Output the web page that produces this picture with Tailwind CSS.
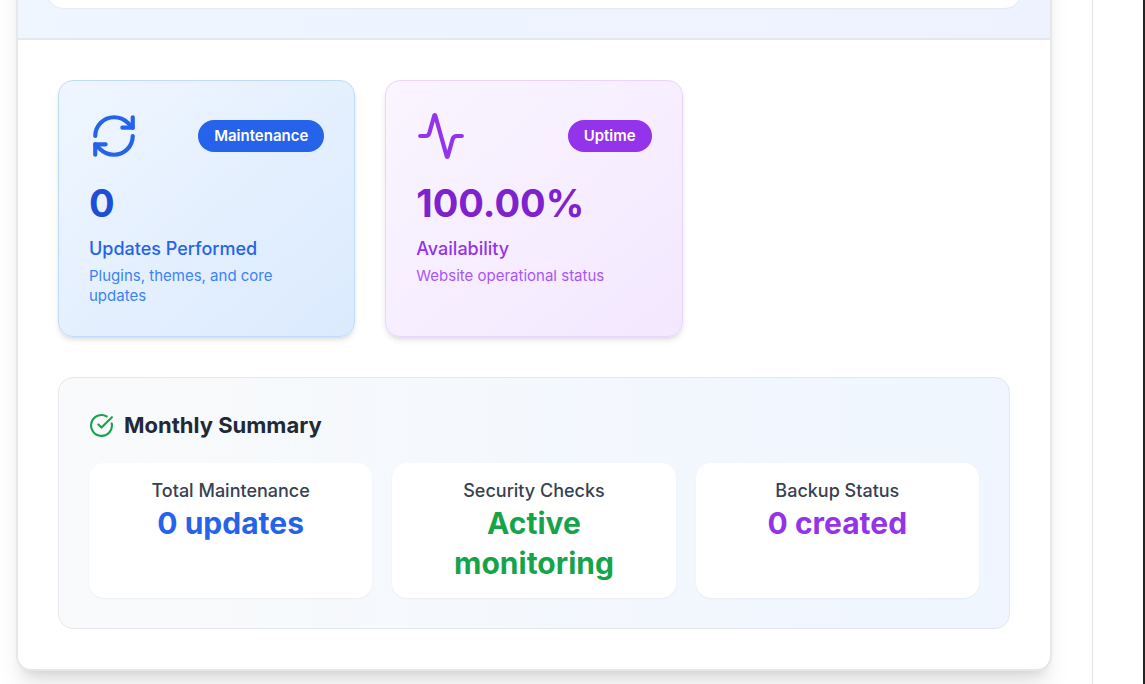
<!DOCTYPE html>
<html lang="en">
<head>
<meta charset="utf-8">
<meta name="viewport" content="width=device-width, initial-scale=1">
<title>Monthly Report</title>
<script src="https://cdn.jsdelivr.net/npm/@tailwindcss/browser@4"></script>
</head>
<body class="bg-[#242424] font-['Inter',sans-serif] antialiased">
<div class="mr-0.5 flex h-screen overflow-hidden bg-white">
  <main class="min-w-0 flex-1 border-r border-[#e5e5e5] pr-10 pl-4">
    <article class="-mt-20 overflow-hidden rounded-[15px] border-2 border-[#e5e7eb] bg-white shadow-[0_20px_25px_-5px_rgb(0_0_0/0.1),0_8px_10px_-6px_rgb(0_0_0/0.1)]">
      <header class="border-b-2 border-[#e5e7eb] bg-linear-to-r from-[#eff6ff] to-[#eef2ff] p-[30px]">
        <div class="h-14 rounded-[15px] bg-white shadow-[0_1px_2px_rgb(0_0_0/0.05)]"></div>
      </header>
      <div class="flex flex-col gap-10 p-10">
        <section class="grid grid-cols-3 gap-[30px]" aria-label="Statistics">
          <div class="rounded-[15px] border border-[#bfdbfe] bg-linear-to-br from-[#eff6ff] to-[#dbeafe] p-[30px] shadow-[0_4px_6px_-1px_rgb(0_0_0/0.1),0_2px_4px_-2px_rgb(0_0_0/0.1)]">
            <div class="mb-5 flex items-center justify-between">
              <svg class="size-[50px] text-[#2563eb]" viewBox="0 0 24 24" fill="none" stroke="currentColor" stroke-width="2" stroke-linecap="round" stroke-linejoin="round" aria-hidden="true"><path d="M3 12a9 9 0 0 1 9-9 9.75 9.75 0 0 1 6.74 2.74L21 8"/><path d="M21 3v5h-5"/><path d="M21 12a9 9 0 0 1-9 9 9.75 9.75 0 0 1-6.74-2.74L3 16"/><path d="M8 16H3v5"/></svg>
              <span class="rounded-full bg-[#2563eb] px-4 py-1.5 text-[15px] leading-5 font-semibold text-white">Maintenance</span>
            </div>
            <p class="text-[38px] leading-[45px] font-bold text-[#1d4ed8]">0</p>
            <p class="mt-2.5 text-[18px] leading-[25px] font-medium text-[#2563eb]">Updates Performed</p>
            <p class="mt-[5px] text-[15px] leading-5 text-[#3b82f6]">Plugins, themes, and core updates</p>
          </div>
          <div class="rounded-[15px] border border-[#e9d5ff] bg-linear-to-br from-[#faf5ff] to-[#f3e8ff] p-[30px] shadow-[0_4px_6px_-1px_rgb(0_0_0/0.1),0_2px_4px_-2px_rgb(0_0_0/0.1)]">
            <div class="mb-5 flex items-center justify-between">
              <svg class="size-[50px] text-[#9333ea]" viewBox="0 0 24 24" fill="none" stroke="currentColor" stroke-width="2" stroke-linecap="round" stroke-linejoin="round" aria-hidden="true"><path d="M22 12h-2.480a2 2 0 0 0-1.930 1.460l-2.350 8.360a.25.25 0 0 1-.48 0L9.240 2.180a.25.25 0 0 0-.48 0l-2.350 8.360A2 2 0 0 1 4.490 12H2"/></svg>
              <span class="rounded-full bg-[#9333ea] px-4 py-1.5 text-[15px] leading-5 font-semibold text-white">Uptime</span>
            </div>
            <p class="text-[38px] leading-[45px] font-bold text-[#7e22ce]">100.00%</p>
            <p class="mt-2.5 text-[18px] leading-[25px] font-medium text-[#9333ea]">Availability</p>
            <p class="mt-[5px] text-[15px] leading-5 text-[#a855f7]">Website operational status</p>
          </div>
        </section>
        <section class="rounded-[15px] border border-[#e5e7eb] bg-linear-to-r from-[#f9fafb] to-[#eff6ff] p-[30px]">
          <h2 class="mb-5 flex items-center gap-2.5 text-[22px] leading-[35px] font-bold text-[#1f2937]">
            <svg class="size-[25px] text-[#16a34a]" viewBox="0 0 24 24" fill="none" stroke="currentColor" stroke-width="2" stroke-linecap="round" stroke-linejoin="round" aria-hidden="true"><path d="M21.801 10A10 10 0 1 1 17 3.335"/><path d="m9 11 3 3L22 4"/></svg>
            Monthly Summary
          </h2>
          <div class="grid grid-cols-3 gap-5 text-center">
            <div class="rounded-[15px] bg-white p-[15px] shadow-[0_1px_2px_rgb(0_0_0/0.05)]">
              <p class="text-[18px] leading-[25px] font-medium text-[#374151]">Total Maintenance</p>
              <p class="text-[30px] leading-10 font-bold text-[#2563eb]">0 updates</p>
            </div>
            <div class="rounded-[15px] bg-white p-[15px] shadow-[0_1px_2px_rgb(0_0_0/0.05)]">
              <p class="text-[18px] leading-[25px] font-medium text-[#374151]">Security Checks</p>
              <p class="text-[30px] leading-10 font-bold text-[#16a34a]">Active monitoring</p>
            </div>
            <div class="rounded-[15px] bg-white p-[15px] shadow-[0_1px_2px_rgb(0_0_0/0.05)]">
              <p class="text-[18px] leading-[25px] font-medium text-[#374151]">Backup Status</p>
              <p class="text-[30px] leading-10 font-bold text-[#9333ea]">0 created</p>
            </div>
          </div>
        </section>
      </div>
    </article>
  </main>
  <aside class="w-[50px] shrink-0"></aside>
</div>
</body>
</html>
